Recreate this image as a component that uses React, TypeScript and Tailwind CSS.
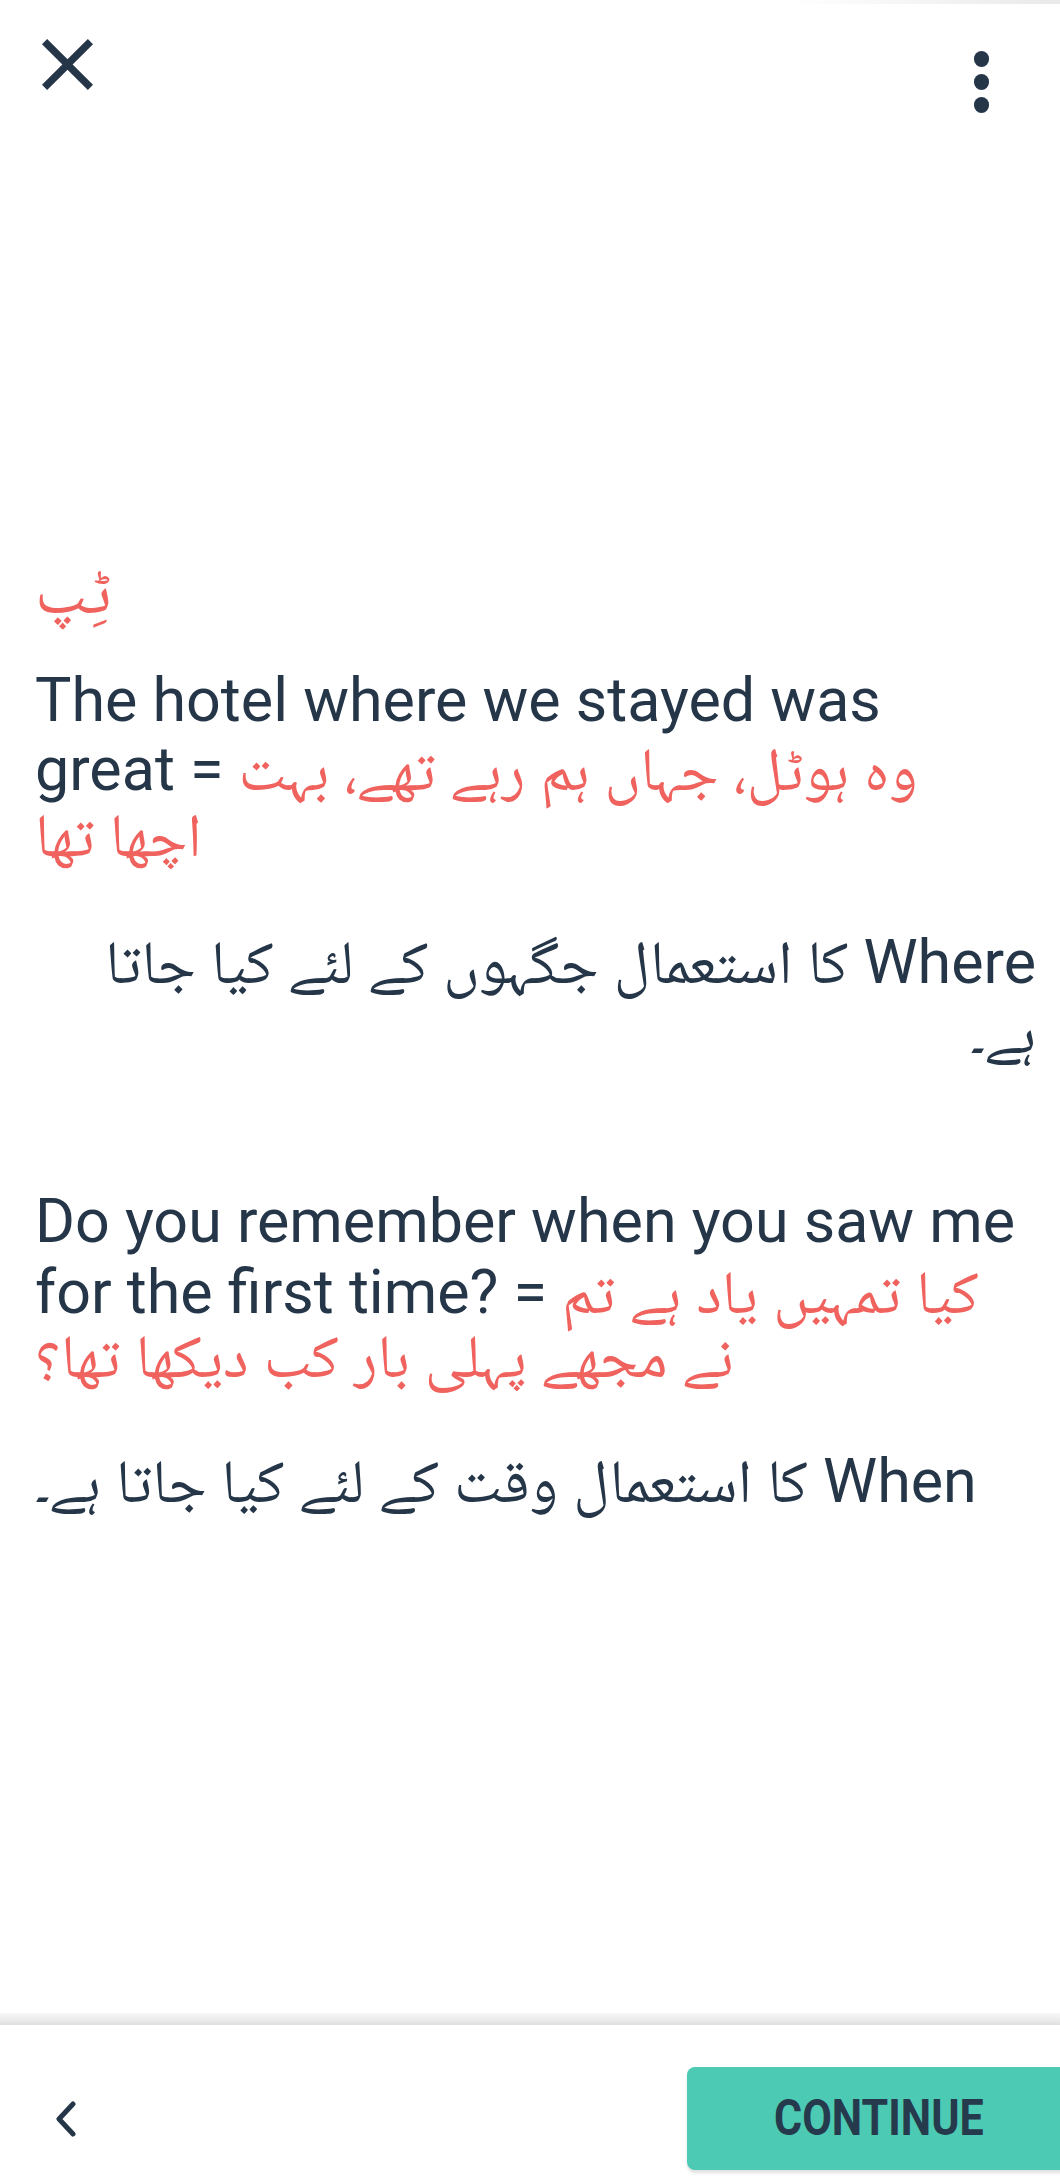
import React from 'react';

const navy = 'text-[#253649]';
const red = 'text-[#f0625d]';

function CloseIcon() {
  return (
    <svg width="51" height="51" viewBox="5 5 14 14" className="fill-[#253649]">
      <path d="M19 6.41L17.59 5 12 10.59 6.41 5 5 6.41 10.59 12 5 17.59 6.41 19 12 13.41 17.59 19 19 17.59 13.41 12z" />
    </svg>
  );
}

function MoreIcon() {
  return (
    <div className="flex flex-col gap-[7px]">
      <span className="block w-[15px] h-[16px] rounded-full bg-[#253649]" />
      <span className="block w-[15px] h-[16px] rounded-full bg-[#253649]" />
      <span className="block w-[15px] h-[16px] rounded-full bg-[#253649]" />
    </div>
  );
}

function BackIcon() {
  return (
    <svg width="24" height="36" viewBox="0 0 24 36" fill="none">
      <polyline points="19,3 5,18 19,33" stroke="#253649" strokeWidth="5" strokeLinecap="round" strokeLinejoin="round" />
    </svg>
  );
}

// every line sits on a 72px line box: baseline ~57px below the top of the row
function Line({ h, className = '', dir, children }: { h: string; className?: string; dir?: 'rtl'; children: React.ReactNode }) {
  return (
    <div dir={dir} className={`${h} leading-[72px] whitespace-nowrap ${className}`}>
      {children}
    </div>
  );
}

export default function App() {
  return (
    <div
      className="relative w-[1060px] h-[2180px] bg-white overflow-hidden flex flex-col"
      style={{ fontFamily: 'Roboto, "Noto Naskh Arabic", "Noto Sans Arabic", "DejaVu Sans", sans-serif' }}
    >
      {/* faint edge left over from the status bar */}
      <div className="absolute top-0 right-0 w-[270px] h-[4px] bg-gradient-to-r from-transparent to-[#e9e9e9]" />

      <header className="h-[120px] flex items-start justify-between pl-[42px] pr-[71px]">
        <div className="mt-[39px]">
          <CloseIcon />
        </div>
        <div className="mt-[51px]">
          <MoreIcon />
        </div>
      </header>

      <main className={`flex flex-col pl-[35px] pr-[24px] pt-[435px] text-[61px] ${navy}`}>
        <Line h="h-[109px]" className={`${red} text-[66px]`}>ٹِپ</Line>

        <Line h="h-[69px]">The hotel where we stayed was</Line>
        <Line h="h-[66px]">
          great = <span className={red}>وہ ہوٹل، جہاں ہم رہے تھے، بہت</span>
        </Line>
        <Line h="h-[72px]" className={red}>اچھا تھا</Line>

        <div className="mt-[55px]">
          <Line h="h-[70px]" dir="rtl" className="text-right">Where کا استعمال جگہوں کے لئے کیا جاتا</Line>
          <Line h="h-[72px]" dir="rtl" className="text-right">ہے۔</Line>
        </div>

        <div className="mt-[117px]">
          <Line h="h-[71px]">Do you remember when you saw me</Line>
          <Line h="h-[64px]">
            for the first time? = <span className={red}>کیا تمہیں یاد ہے تم</span>
          </Line>
          <Line h="h-[72px]" className={red}>نے مجھے پہلی بار کب دیکھا تھا؟</Line>
        </div>

        <div className="mt-[53px]">
          <Line h="h-[72px]" dir="rtl" className="text-left">When کا استعمال وقت کے لئے کیا جاتا ہے۔</Line>
        </div>
      </main>

      <div className="flex-1" />

      <footer className="flex flex-col">
        <div className="h-[12px] bg-gradient-to-b from-[#f8f8f8] via-[#ededed] to-[#dedede]" />
        <div className="h-[155px] pt-[42px] flex items-start justify-between pl-[54px]">
          <div className="h-[103px] flex items-center">
            <BackIcon />
          </div>
          <button className="w-[383px] h-[103px] -mr-[10px] rounded-[8px] bg-[#4ccab3] shadow-[0_3px_3px_rgba(0,0,0,0.12)] flex items-center justify-center">
            <span className="block scale-x-[0.86] text-[50px] font-bold text-[#263a4d] font-[Roboto]">CONTINUE</span>
          </button>
        </div>
      </footer>
    </div>
  );
}
